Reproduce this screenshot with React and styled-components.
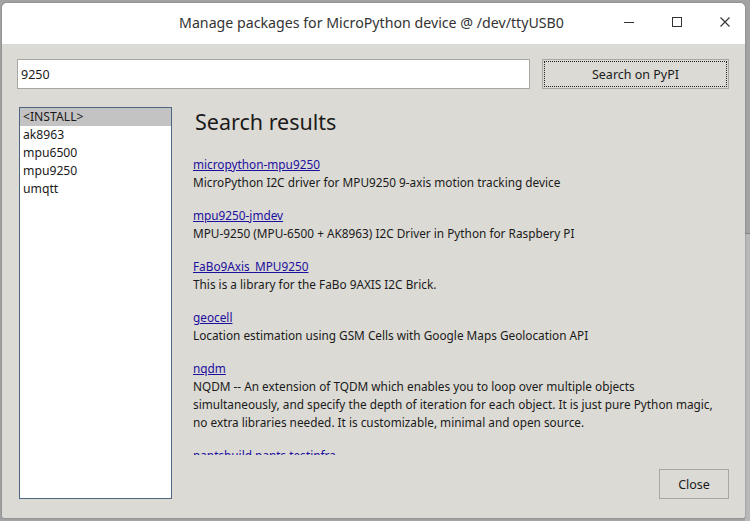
import React from "react";
import styled, { createGlobalStyle } from "styled-components";

const GlobalStyle = createGlobalStyle`
  html, body {
    margin: 0;
    padding: 0;
    background: #a3a3a3;
  }
  body {
    width: 750px;
    height: 521px;
    overflow: hidden;
    font-family: "Noto Sans", "DejaVu Sans", sans-serif;
  }
`;

const results = [
  {
    name: "micropython-mpu9250",
    desc: "MicroPython I2C driver for MPU9250 9-axis motion tracking device",
  },
  {
    name: "mpu9250-jmdev",
    desc: "MPU-9250 (MPU-6500 + AK8963) I2C Driver in Python for Raspbery PI",
  },
  {
    name: "FaBo9Axis_MPU9250",
    desc: "This is a library for the FaBo 9AXIS I2C Brick.",
  },
  {
    name: "geocell",
    desc: "Location estimation using GSM Cells with Google Maps Geolocation API",
  },
  {
    name: "nqdm",
    desc: "NQDM -- An extension of TQDM which enables you to loop over multiple objects simultaneously, and specify the depth of iteration for each object. It is just pure Python magic, no extra libraries needed. It is customizable, minimal and open source.",
  },
  {
    name: "pantsbuild.pants.testinfra",
    desc: "",
  },
];

const installed = ["<INSTALL>", "ak8963", "mpu6500", "mpu9250", "umqtt"];

export default function App() {
  return (
    <>
      <GlobalStyle />
      <Desk>
        <Window>
          <TitleBar>
            <Title>Manage packages for MicroPython device @ /dev/ttyUSB0</Title>
            <Controls>
              <CtrlBtn aria-label="minimize">
                <svg width="12" height="12" viewBox="0 0 12 12">
                  <path d="M1 6.5h10" stroke="#333" strokeWidth="1" />
                </svg>
              </CtrlBtn>
              <CtrlBtn aria-label="maximize">
                <svg width="12" height="12" viewBox="0 0 12 12">
                  <rect x="1.5" y="1.5" width="9" height="9" fill="none" stroke="#333" strokeWidth="1" />
                </svg>
              </CtrlBtn>
              <CtrlBtn aria-label="close">
                <svg width="12" height="12" viewBox="0 0 12 12">
                  <path d="M1.5 1.5l9 9M10.5 1.5l-9 9" stroke="#333" strokeWidth="1.1" />
                </svg>
              </CtrlBtn>
            </Controls>
          </TitleBar>
          <Body>
            <SearchRow>
              <Entry defaultValue="9250" />
              <Button focused>Search on PyPI</Button>
            </SearchRow>
            <Main>
              <ListBox>
                {installed.map((p, i) => (
                  <ListItem key={p} selected={i === 0}>
                    {p}
                  </ListItem>
                ))}
              </ListBox>
              <RightCol>
                <Results>
                  <Heading>Search results</Heading>
                  {results.map((r) => (
                    <Result key={r.name}>
                      <Link href="#">{r.name}</Link>
                      {r.desc && <Desc>{r.desc}</Desc>}
                    </Result>
                  ))}
                </Results>
                <Footer>
                  <Button wide>Close</Button>
                </Footer>
              </RightCol>
            </Main>
          </Body>
        </Window>
        <BackWindow />
      </Desk>
    </>
  );
}

const Desk = styled.div`
  position: relative;
  width: 750px;
  height: 521px;
  padding: 3px 0 0 2px;
  box-sizing: border-box;
`;

const BackWindow = styled.div`
  position: absolute;
  right: 0;
  top: 233px;
  width: 5px;
  height: 288px;
  background: #b8b8b8;
  border-top: 1px solid #8a8a8a;
`;

const Window = styled.div`
  position: relative;
  z-index: 1;
  width: 743px;
  height: 515px;
  background: #dcdad5;
  border-radius: 5px 5px 2px 2px;
  overflow: hidden;
  box-shadow: 0 0 2px rgba(0, 0, 0, 0.35);
  display: flex;
  flex-direction: column;
`;

const TitleBar = styled.div`
  height: 41px;
  flex: none;
  box-sizing: border-box;
  padding-bottom: 3px;
  background: #ffffff;
  display: flex;
  align-items: center;
  justify-content: center;
  position: relative;
`;

const Title = styled.div`
  font-family: "Noto Sans", sans-serif;
  font-size: 14.2px;
  color: #333333;
  padding-right: 4px;
`;

const Controls = styled.div`
  position: absolute;
  right: 8px;
  top: 0;
  bottom: 3px;
  display: flex;
  align-items: center;
  gap: 24px;
`;

const CtrlBtn = styled.div`
  width: 24px;
  height: 24px;
  display: flex;
  align-items: center;
  justify-content: center;
`;

const Body = styled.div`
  flex: 1;
  display: flex;
  flex-direction: column;
  padding: 15px 16px 19px 15px;
  gap: 18px;
  min-height: 0;
`;

const SearchRow = styled.div`
  display: flex;
  gap: 12px;
  height: 30px;
`;

const Entry = styled.input`
  flex: 1;
  box-sizing: border-box;
  height: 30px;
  border: 1px solid #a9a7a2;
  background: #ffffff;
  padding: 0 3px;
  font-family: "Noto Sans", sans-serif;
  font-size: 12.5px;
  color: #1a1a1a;
  outline: none;
`;

const Button = styled.button`
  box-sizing: border-box;
  width: ${(p) => (p.wide ? "70px" : "187px")};
  height: 30px;
  flex: none;
  background: #dcdad5;
  border: 1px solid #a9a7a2;
  font-family: "Noto Sans", sans-serif;
  font-size: 12.5px;
  color: #1a1a1a;
  padding: 0;
  outline: ${(p) => (p.focused ? "1px dotted #222" : "none")};
  outline-offset: -3px;
`;

const Main = styled.div`
  flex: 1;
  min-height: 0;
  display: grid;
  grid-template-columns: 153px 1fr;
  gap: 21px;
  padding-left: 2px;
`;

const ListBox = styled.div`
  border: 1px solid #4d6580;
  background: #ffffff;
  box-sizing: border-box;
  font-family: "Noto Sans", sans-serif;
  font-size: 12.2px;
  color: #1a1a1a;
`;

const ListItem = styled.div`
  height: 18px;
  line-height: 18px;
  padding-left: 3px;
  background: ${(p) => (p.selected ? "#c3c3c3" : "transparent")};
`;

const RightCol = styled.div`
  display: flex;
  flex-direction: column;
  min-height: 0;
`;

const Results = styled.div`
  height: 348px;
  overflow: hidden;
  padding-right: 14px;
`;

const Heading = styled.div`
  font-family: "Noto Sans", sans-serif;
  font-size: 21.5px;
  color: #1a1a1a;
  margin: -1px 0 0 2px;
  line-height: 32px;
  height: 49px;
`;

const Result = styled.div`
  margin-bottom: 15px;
  font-family: "Noto Sans", sans-serif;
  font-size: 11.8px;
  line-height: 18px;
`;

const Link = styled.a`
  display: inline-block;
  color: #1b0f9e;
  text-decoration: underline;
`;

const Desc = styled.div`
  color: #1a1a1a;
`;

const Footer = styled.div`
  margin-top: auto;
  display: flex;
  justify-content: flex-end;
`;
